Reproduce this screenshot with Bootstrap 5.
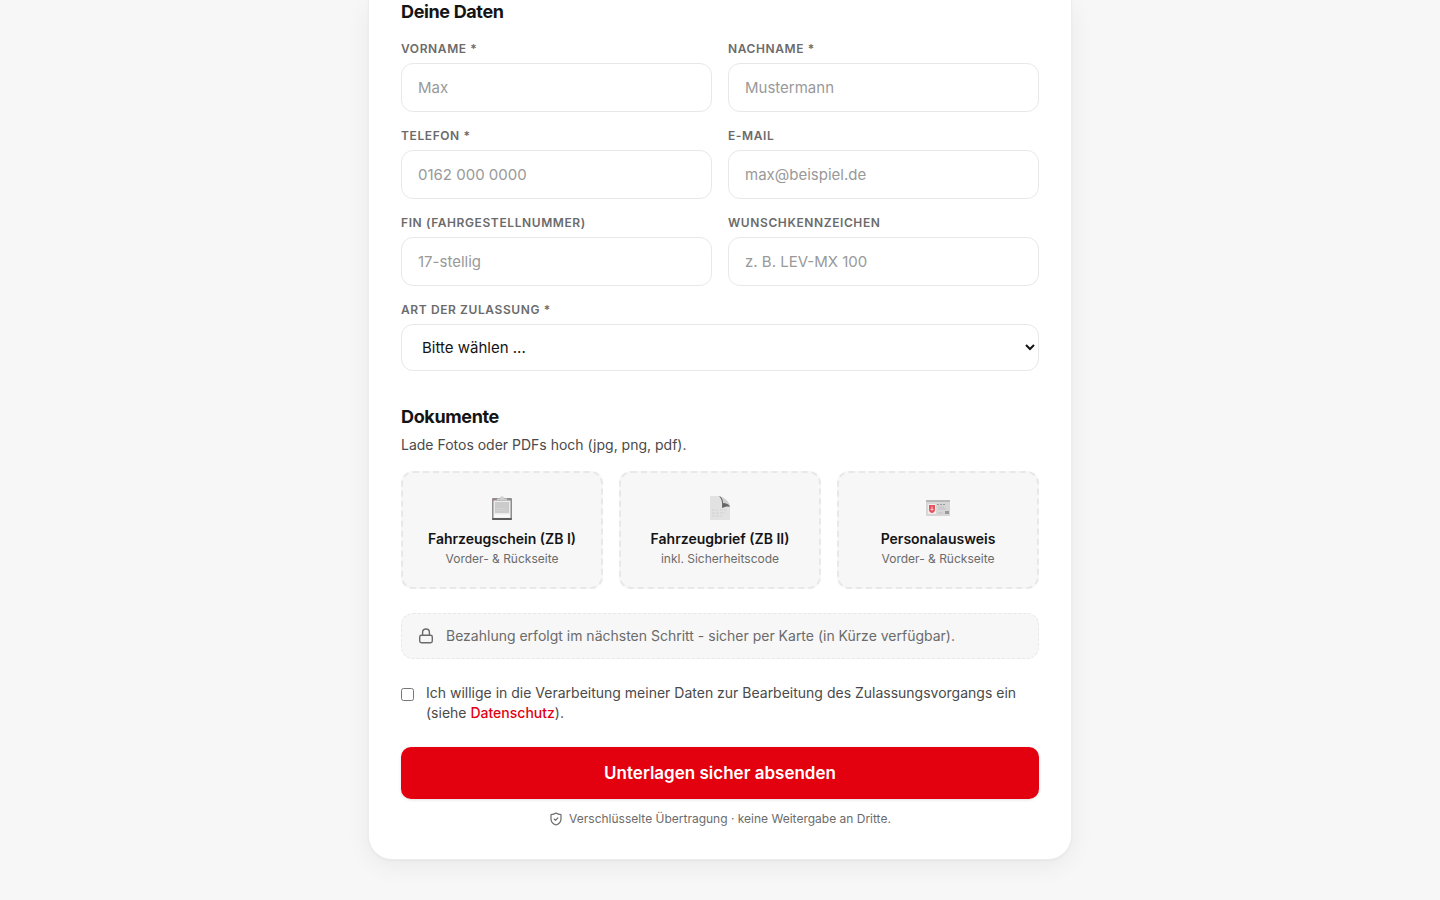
<!DOCTYPE html>
<html lang="de">
<head>
<meta charset="utf-8">
<meta name="viewport" content="width=device-width, initial-scale=1">
<title>Zulassung – Deine Daten</title>
<link href="https://cdn.jsdelivr.net/npm/bootstrap@5.3.0/dist/css/bootstrap.min.css" rel="stylesheet">
<style>
  body { background: #f7f7f7; color: #141414; font-family: Inter, "Liberation Sans", sans-serif; font-size: 14px; line-height: 20px; }
  .form-shell { max-width: 704px; border: 1px solid #ededed; border-top: 0; border-radius: 0 0 24px 24px; box-shadow: 0 6px 24px rgba(0,0,0,.06), 0 1px 2px rgba(0,0,0,.04); }
  .section-title { font-size: 18px; line-height: 24px; font-weight: 700; letter-spacing: -.02em; }
  .first-title { margin-bottom: 17px; }
  .docs-section { margin-top: 34px; }
  .field-label { display: block; margin-bottom: 6px; font-size: 12px; line-height: 16px; font-weight: 600; letter-spacing: .05em; text-transform: uppercase; color: #6b6b6b; }
  .field-box { height: 49px; padding: 0 16px; border: 1px solid #e8e8e8; border-radius: 12px; font-size: 15px; color: #141414; }
  .field-box::placeholder { color: #999; }
  select.field-box { height: 47px; appearance: auto; background-color: #fff; }
  .hint-text { margin-top: 5px; line-height: 21px; color: #4a4a4a; }
  .upload-tile { padding: 18px 8px; background: #f7f7f7; border: 2px dashed #e8e8e8; border-radius: 12px; cursor: pointer; }
  .upload-icon { height: 34px; margin-bottom: 4px; }
  .tile-note { font-size: 12px; color: #6b6b6b; }
  .pay-note { padding: 12px 16px; background: #f7f7f7; border: 1px dashed #e8e8e8; border-radius: 12px; color: #6b6b6b; }
  .consent-text { color: #4a4a4a; }
  .consent-text a { color: #e3000f; font-weight: 500; text-decoration: none; }
  .consent-box { width: 13px; height: 13px; margin: 5px 0 0; }
  .btn-send { height: 52px; padding: 8px 16px 6px; border: 0; border-radius: 10px; background: #e3000f; color: #fff; font-size: 17px; font-weight: 600; box-shadow: 0 1px 3px rgba(0,0,0,.12); }
  .btn-send:hover { background: #c4000d; color: #fff; }
  .secure-note { margin-top: 12px; gap: 6px; font-size: 12px; line-height: 16px; color: #6b6b6b; }
</style>
</head>
<body>
<main class="container-fluid pb-4">
  <form class="form-shell bg-white mx-auto px-4 px-sm-0 mb-3">
    <div class="px-sm-4 mx-sm-2 pb-2 mb-0">
      <section>
        <h2 class="section-title first-title">Deine Daten</h2>
        <div class="row g-3">
          <div class="col-sm-6"><label class="field-label" for="vorname">Vorname *</label><input class="form-control field-box" id="vorname" type="text" placeholder="Max"></div>
          <div class="col-sm-6"><label class="field-label" for="nachname">Nachname *</label><input class="form-control field-box" id="nachname" type="text" placeholder="Mustermann"></div>
          <div class="col-sm-6"><label class="field-label" for="telefon">Telefon *</label><input class="form-control field-box" id="telefon" type="tel" placeholder="0162 000 0000"></div>
          <div class="col-sm-6"><label class="field-label" for="email">E-Mail</label><input class="form-control field-box" id="email" type="email" placeholder="max@beispiel.de"></div>
          <div class="col-sm-6"><label class="field-label" for="fin">FIN (Fahrgestellnummer)</label><input class="form-control field-box" id="fin" type="text" placeholder="17-stellig"></div>
          <div class="col-sm-6"><label class="field-label" for="kennzeichen">Wunschkennzeichen</label><input class="form-control field-box" id="kennzeichen" type="text" placeholder="z. B. LEV-MX 100"></div>
          <div class="col-12"><label class="field-label" for="art">Art der Zulassung *</label>
            <select class="field-box w-100 d-block" id="art"><option>Bitte wählen ...</option></select></div>
        </div>
      </section>

      <section class="docs-section">
        <h2 class="section-title mb-0">Dokumente</h2>
        <p class="hint-text mb-3">Lade Fotos oder PDFs hoch (jpg, png, pdf).</p>
        <div class="row g-3 text-center">
          <div class="col-sm-4">
            <label class="upload-tile d-block" for="zb1">
              <span class="upload-icon d-flex align-items-center justify-content-center">
                <svg width="24" height="24" viewBox="0 0 24 24" aria-hidden="true">
                  <rect x="2" y="2" width="20" height="22" rx="1" fill="#8e8e8e"/>
                  <rect x="2" y="22" width="20" height="2" rx="1" fill="#5c5c5c"/>
                  <rect x="3.500" y="4.500" width="17" height="17.500" fill="#ececec"/>
                  <rect x="5" y="6" width="14" height="11" fill="#cbcbcb"/>
                  <path d="M6 14.500h11M7 12.500h8" stroke="#d6d6d6" stroke-dasharray="2 1"/>
                  <path d="M4 20h16" stroke="#fafafa" stroke-width="3"/>
                  <path d="M7 4V2.500h3c0-3 4-3 4 0h3V4z" fill="#cfcfcf"/>
                  <path d="M3 3.500h2" stroke="#ad7777"/>
                </svg>
              </span>
              <span class="d-block fw-semibold">Fahrzeugschein (ZB I)</span>
              <span class="tile-note d-block">Vorder- &amp; Rückseite</span>
            </label>
            <input class="visually-hidden" type="file" id="zb1">
          </div>
          <div class="col-sm-4">
            <label class="upload-tile d-block" for="zb2">
              <span class="upload-icon d-flex align-items-center justify-content-center">
                <svg width="24" height="24" viewBox="0 0 24 24" aria-hidden="true">
                  <path d="M2 0h10l10 11v13H2z" fill="#e2e2e2"/>
                  <path d="M11 0c5 1 11 6 11 10.500L14.500 11C15 7 14 3 11 0z" fill="#d0d0d0"/>
                  <path d="M11 0c3 1 4 4 4 7 3 0 6 1 7 4-3-1-5 0-8 1 .5-5 0-9-3-12z" fill="#666"/>
                  <path d="M4 14h6M4 17h13M4 20h10M12 14h6" stroke="#d2d2d2" stroke-dasharray="3 1"/>
                </svg>
              </span>
              <span class="d-block fw-semibold">Fahrzeugbrief (ZB II)</span>
              <span class="tile-note d-block">inkl. Sicherheitscode</span>
            </label>
            <input class="visually-hidden" type="file" id="zb2">
          </div>
          <div class="col-sm-4">
            <label class="upload-tile d-block" for="ausweis">
              <span class="upload-icon d-flex align-items-center justify-content-center">
                <svg width="24" height="24" viewBox="0 0 24 24" aria-hidden="true">
                  <rect y="4" width="24" height="16" rx="1" fill="#d6d6d6"/>
                  <path d="M0 5h24" stroke="#b8b8b8" stroke-width="2"/>
                  <rect x="2" y="8" width="8" height="10" rx="1" fill="#f3eded"/>
                  <path d="M3 9h6v5c0 2-2 3-3 3s-3-1-3-3z" fill="#e4525c"/>
                  <path d="M6 10.500v4M4.500 13.500h3" stroke="#f3c9cc"/>
                  <path d="M11 8.500h9" stroke="#9a9a9a" stroke-dasharray="2 1"/>
                  <path d="M12 11h6M12 13h8M12 17h5" stroke="#c2c2c2"/>
                  <rect x="19" y="15" width="4" height="3" fill="#999"/>
                </svg>
              </span>
              <span class="d-block fw-semibold">Personalausweis</span>
              <span class="tile-note d-block">Vorder- &amp; Rückseite</span>
            </label>
            <input class="visually-hidden" type="file" id="ausweis">
          </div>
        </div>
      </section>

      <div class="pay-note d-flex align-items-center mt-4">
        <svg class="flex-shrink-0" width="16" height="16" viewBox="0 0 16 16" fill="none" stroke="#6b6b6b" stroke-width="1.4" stroke-linecap="round" stroke-linejoin="round" aria-hidden="true"><rect x="1.7" y="7.3" width="12.6" height="7.4" rx="1.6"/><path d="M4.6 7.3V4.4a3.4 3.4 0 0 1 6.8 0v2.9"/></svg>
        <span class="ps-2 ms-1">Bezahlung erfolgt im nächsten Schritt - sicher per Karte (in Kürze verfügbar).</span>
      </div>

      <div class="d-flex align-items-start mt-4">
        <input class="consent-box flex-shrink-0" type="checkbox" id="consent">
        <label class="consent-text ps-2 ms-1" for="consent">Ich willige in die Verarbeitung meiner Daten zur Bearbeitung des Zulassungsvorgangs ein (siehe <a href="#datenschutz">Datenschutz</a>).</label>
      </div>

      <button class="btn btn-send w-100 mt-4" type="submit">Unterlagen sicher absenden</button>
      <p class="secure-note d-flex align-items-center justify-content-center mb-4">
        <svg width="14" height="14" viewBox="0 0 14 14" fill="none" stroke="#6b6b6b" stroke-width="1.2" stroke-linecap="round" stroke-linejoin="round" aria-hidden="true"><path d="M7 1c1.300 1 2.900 1.600 5 1.700V7c0 3.200-2 5-5 6-3-1-5-2.800-5-6V2.700C4.100 2.600 5.700 2 7 1z"/><path d="M5.200 7.100l1.300 1.300 2.400-2.500"/></svg>
        <span>Verschlüsselte Übertragung · keine Weitergabe an Dritte.</span>
      </p>
    </div>
  </form>
</main>
<script src="https://cdn.jsdelivr.net/npm/bootstrap@5.3.0/dist/js/bootstrap.bundle.min.js"></script>
</body>
</html>
